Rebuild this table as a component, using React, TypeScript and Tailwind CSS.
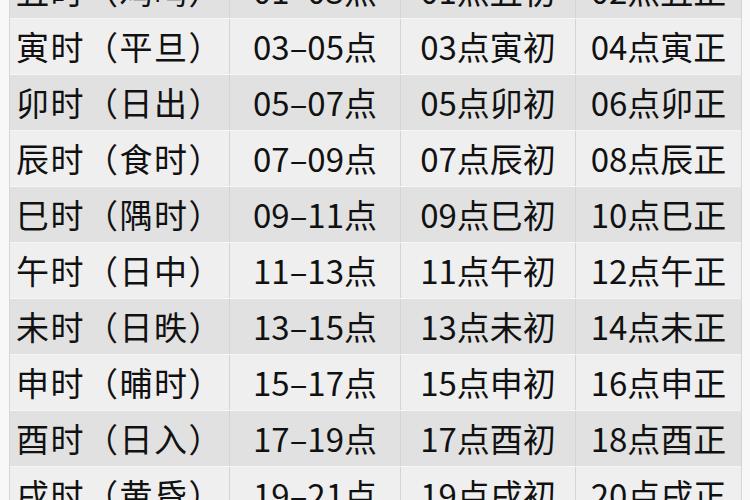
const ROWS = [
  ["丑时（鸡鸣）", "01–03点", "01点丑初", "02点丑正"],
  ["寅时（平旦）", "03–05点", "03点寅初", "04点寅正"],
  ["卯时（日出）", "05–07点", "05点卯初", "06点卯正"],
  ["辰时（食时）", "07–09点", "07点辰初", "08点辰正"],
  ["巳时（隅时）", "09–11点", "09点巳初", "10点巳正"],
  ["午时（日中）", "11–13点", "11点午初", "12点午正"],
  ["未时（日昳）", "13–15点", "13点未初", "14点未正"],
  ["申时（晡时）", "15–17点", "15点申初", "16点申正"],
  ["酉时（日入）", "17–19点", "17点酉初", "18点酉正"],
  ["戌时（黄昏）", "19–21点", "19点戌初", "20点戌正"],
];

export default function App() {
  return (
    <div
      className="h-[500px] w-[750px] overflow-hidden bg-[#f8f8f8] pl-[9px] text-[#111111]"
      style={{ fontFamily: '"Noto Sans CJK SC", "Noto Sans", sans-serif' }}
    >
      <div className="-mt-[37px] w-[733px] border-l border-r border-[#d6d6d6]">
        {ROWS.map((row, i) => (
          <div
            key={row[0]}
            className={`grid h-[56px] grid-cols-[220px_171px_175px_1fr] border-b border-[#f6f6f6] text-[33px] leading-none ${
              i % 2 === 0 ? "bg-[#e1e1e1]" : "bg-[#efefef]"
            }`}
          >
            <div className="flex items-center border-r border-[#d4d4d4] pl-[6px] tracking-[1.5px]">
              {row[0]}
            </div>
            <div className="flex items-center justify-center border-r border-[#d4d4d4]">
              {row[1]}
            </div>
            <div className="flex items-center justify-center border-r border-[#d4d4d4]">
              {row[2]}
            </div>
            <div className="flex items-center justify-center">{row[3]}</div>
          </div>
        ))}
      </div>
    </div>
  );
}
